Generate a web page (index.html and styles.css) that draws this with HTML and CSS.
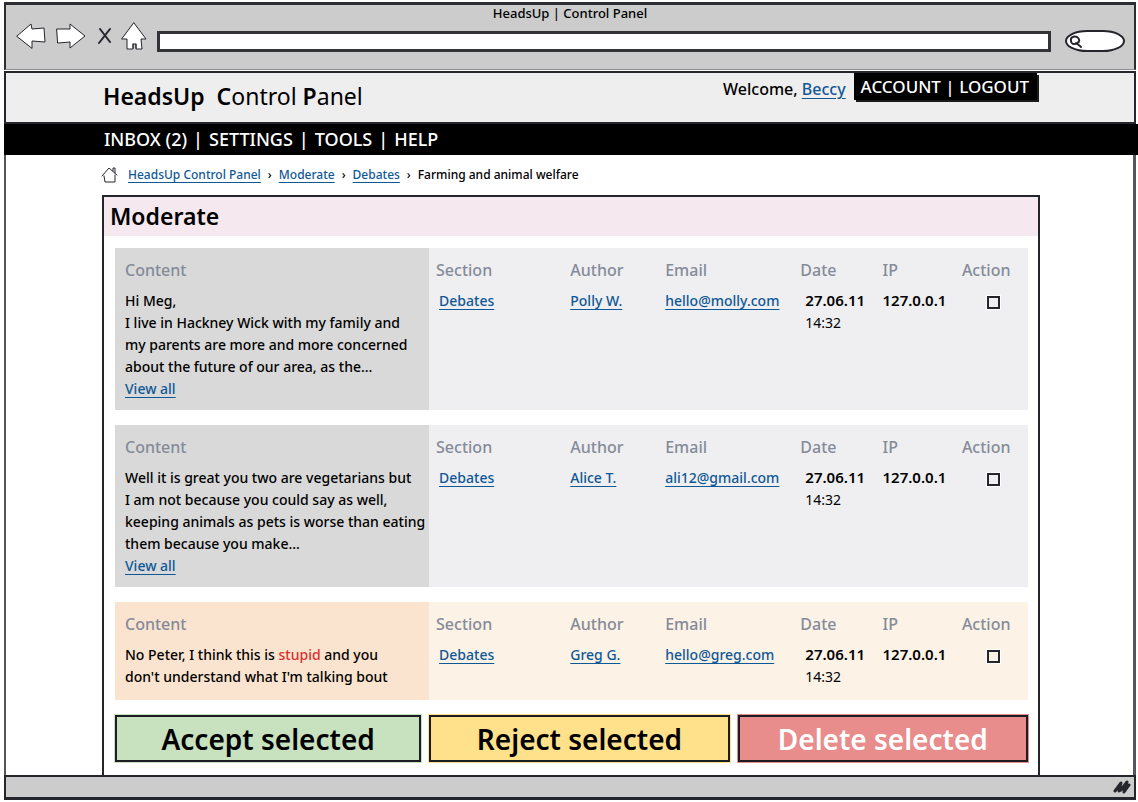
FILE: index.html
```html
<!DOCTYPE html>
<html lang="en">
<head>
<meta charset="utf-8">
<meta name="viewport" content="width=device-width, initial-scale=1">
<title>HeadsUp | Control Panel</title>
<link rel="stylesheet" href="styles.css">
</head>
<body>
<div class="window">
  <div class="chrome">
    <div class="chrome-title">HeadsUp | Control Panel</div>
    <div class="toolbar">
      <button class="tool" type="button" aria-label="Back"><svg width="30" height="28" viewBox="0 0 30 28"><path d="M1 14 L15 2 L16 7 L28 6 L29 20 L16 19 L16 26 Z"/></svg></button>
      <button class="tool tool-forward" type="button" aria-label="Forward"><svg width="30" height="28" viewBox="0 0 30 28"><path d="M1 7 L14 7 L14 2 L29 14 L14 26 L14 20 L2 21 Z"/></svg></button>
      <button class="tool tool-stop" type="button" aria-label="Stop"><svg width="14" height="28" viewBox="0 0 14 28"><path d="M2 7 L12 20 M12 7 L1 21"/></svg></button>
      <button class="tool tool-home" type="button" aria-label="Home"><svg width="26" height="28" viewBox="0 0 26 28"><path d="M13 1 L25 17 L20 17 L21 27 L15 27 V22 L12 22 L12 27 L6 27 L6 17 L1 17 Z M12 22 V26 M15 22 V26"/></svg></button>
      <input class="address" type="text" aria-label="Address">
      <label class="search">
        <svg width="16" height="16" viewBox="0 0 16 16"><path d="M3 8 C2 4 6 3 9 4 C12 6 12 9 9 10 C6 12 3 11 3 8 M8 10 L12 13 L13 14"/></svg>
        <input type="text" aria-label="Search">
      </label>
    </div>
  </div>

  <header class="masthead">
    <div class="logo"><b>HeadsUp</b>&nbsp; <b>C</b>ontrol <b>P</b>anel</div>
    <div class="user">
      <span class="welcome">Welcome, <a href="#">Beccy</a></span>
      <div class="account"><a href="#">ACCOUNT</a> | <a href="#">LOGOUT</a></div>
    </div>
  </header>

  <nav class="menu"><a href="#">INBOX (2)</a><span>|</span><a href="#">SETTINGS</a><span>|</span><a href="#">TOOLS</a><span>|</span><a href="#">HELP</a></nav>

  <main class="page">
    <nav class="crumbs" aria-label="Breadcrumb">
      <svg width="18" height="18" viewBox="0 0 18 18"><path d="M0 10 L7 2 L15 9 M2 10 L3 16 H13 V9 M11 5 V2 H13 V7"/></svg>
      <a href="#">HeadsUp Control Panel</a><span>›</span><a href="#">Moderate</a><span>›</span><a href="#">Debates</a><span>›</span><span>Farming and animal welfare</span>
    </nav>

    <section class="panel">
      <h1>Moderate</h1>
      <div class="panel-body">
        <table class="card">
          <thead><tr><th class="c-content">Content</th><th class="c-section">Section</th><th class="c-author">Author</th><th class="c-email">Email</th><th class="c-date">Date</th><th class="c-ip">IP</th><th class="c-action">Action</th></tr></thead>
          <tbody><tr>
            <td class="message">Hi Meg,<br>I live in Hackney Wick with my family and<br>my parents are more and more concerned<br>about the future of our area, as the...<br><a href="#">View all</a></td>
            <td class="topic"><a href="#">Debates</a></td><td><a href="#">Polly W.</a></td><td><a href="#">hello@molly.com</a></td>
            <td class="date"><b>27.06.11</b><br>14:32</td><td class="ip"><b>127.0.0.1</b></td>
            <td class="pick"><input type="checkbox" aria-label="Select message by Polly W."></td>
          </tr></tbody>
        </table>
        <table class="card">
          <thead><tr><th class="c-content">Content</th><th class="c-section">Section</th><th class="c-author">Author</th><th class="c-email">Email</th><th class="c-date">Date</th><th class="c-ip">IP</th><th class="c-action">Action</th></tr></thead>
          <tbody><tr>
            <td class="message">Well it is great you two are vegetarians but<br>I am not because you could say as well,<br>keeping animals as pets is worse than eating<br>them because you make...<br><a href="#">View all</a></td>
            <td class="topic"><a href="#">Debates</a></td><td><a href="#">Alice T.</a></td><td><a href="#">ali12@gmail.com</a></td>
            <td class="date"><b>27.06.11</b><br>14:32</td><td class="ip"><b>127.0.0.1</b></td>
            <td class="pick"><input type="checkbox" aria-label="Select message by Alice T."></td>
          </tr></tbody>
        </table>
        <table class="card flagged">
          <thead><tr><th class="c-content">Content</th><th class="c-section">Section</th><th class="c-author">Author</th><th class="c-email">Email</th><th class="c-date">Date</th><th class="c-ip">IP</th><th class="c-action">Action</th></tr></thead>
          <tbody><tr>
            <td class="message">No Peter, I think this is <mark>stupid</mark> and you<br>don't understand what I'm talking bout</td>
            <td class="topic"><a href="#">Debates</a></td><td><a href="#">Greg G.</a></td><td><a href="#">hello@greg.com</a></td>
            <td class="date"><b>27.06.11</b><br>14:32</td><td class="ip"><b>127.0.0.1</b></td>
            <td class="pick"><input type="checkbox" aria-label="Select message by Greg G."></td>
          </tr></tbody>
        </table>
        <div class="actions">
          <button class="accept" type="button">Accept selected</button>
          <button class="reject" type="button">Reject selected</button>
          <button class="delete" type="button">Delete selected</button>
        </div>
      </div>
    </section>
  </main>

  <footer class="status">
    <svg width="18" height="16" viewBox="0 0 18 16"><path d="M2 12 L8 4 L6 12 L8 11 L14 3 L11 13 L16 6"/></svg>
  </footer>
</div>
</body>
</html>
```
FILE: styles.css
```css
* { box-sizing: border-box; }

body {
  margin: 0;
  background: #fff;
  color: #000;
  font-family: "Comic Sans MS", "Noto Sans", sans-serif;
  font-size: 13px;
  line-height: 22px;
}

a { color: #0f5896; text-underline-offset: 3px; }
svg { display: block; fill: none; stroke: #25262c; stroke-width: 2; stroke-linejoin: round; stroke-linecap: round; }
button, input { font: inherit; color: inherit; }

.window {
  display: flex;
  flex-direction: column;
  min-height: 100vh;
  padding: 2px 2px 2px 4px;
}

.chrome {
  height: 68px;
  background: #ccc;
  border: 2px solid #2c2d31;
  border-top-width: 3px;
  border-bottom: 1px solid #8c8c8c;
}
.chrome-title { height: 16px; line-height: 16px; text-align: center; font-weight: 500; }
.toolbar { display: flex; align-items: flex-start; padding: 0 9px 0 10px; }
.tool { flex: none; padding: 0; border: 0; background: none; }
.tool path { fill: #fff; stroke-width: 1; }
.tool-forward { margin-left: 10px; }
.tool-stop { margin-left: 12px; }
.tool-home { margin-left: 9px; }
.tool-stop path { fill: none; stroke-width: 2; }
.tool svg { margin-top: 1px; }
.address {
  flex: 1;
  min-width: 0;
  height: 21px;
  margin: 10px 14px 0 10px;
  padding: 0 6px;
  border: 3px solid #333438;
  background: #fff;
}
.search {
  display: flex;
  align-items: center;
  width: 60px;
  height: 22px;
  margin-top: 9px;
  padding-left: 1px;
  border: 2px solid #25262c;
  border-radius: 22px / 11px;
  background: #fff;
}
.search svg { flex: none; }
.search input { width: 100%; min-width: 0; padding: 0; border: 0; background: none; outline: 0; }

.masthead {
  display: flex;
  justify-content: space-between;
  align-items: flex-start;
  height: 53px;
  margin-top: 1px;
  padding: 0 97px;
  border: 2px solid #25262c;
  background: #eee;
}
.logo { line-height: 46px; font-size: 23px; }
.logo b { font-weight: 600; }
.user { display: flex; gap: 8px; white-space: nowrap; }
.welcome { line-height: 32px; font-size: 16px; font-weight: 500; }
.account {
  height: 27px;
  padding: 0 8px 0 7px;
  line-height: 27px;
  font-size: 17px;
  font-weight: 500;
  color: #fff;
  background: #000;
  box-shadow: 2px 2px 0 #1a1a1a;
}
.account a, .menu a { color: #fff; text-decoration: none; }

.menu {
  display: flex;
  gap: 6px;
  margin-right: -2px;
  padding: 0 100px;
  line-height: 31px;
  font-size: 18px;
  font-weight: 500;
  color: #fff;
  background: #000;
}

.page {
  flex: 1;
  display: flex;
  flex-direction: column;
  padding: 0 93px 0 96px;
  border: solid #55565c;
  border-width: 0 3px 0 2px;
}
.crumbs { display: flex; align-items: center; gap: 7px; height: 40px; font-size: 12px; font-weight: 500; }
.crumbs svg { margin-right: 1px; stroke-width: 1; overflow: visible; }

.panel {
  flex: 1;
  display: flex;
  flex-direction: column;
  border: 2px solid #25262c;
  border-bottom: 0;
}
.panel h1 {
  margin: 0;
  padding-left: 6px;
  line-height: 39px;
  font-size: 23px;
  font-weight: 600;
  background: #f5e8ee;
}
.panel-body { display: flex; flex-direction: column; gap: 15px; padding: 12px 10px 12px 11px; }

.card {
  width: 100%;
  table-layout: fixed;
  border-collapse: collapse;
  background: #efeff1;
  font-size: 14px;
  font-weight: 500;
}
.card th, .card td { padding: 0 0 0 7px; text-align: left; vertical-align: top; white-space: nowrap; }
.card th { height: 42px; padding-top: 11px; font-size: 16px; font-weight: 500; color: #858b99; }
.card td { padding-bottom: 10px; }
.card .c-content, .card .message { padding-left: 10px; background: #d9d9d9; }
.c-content { width: 34.4%; }
.c-section { width: 14.7%; }
.c-author { width: 10.4%; }
.c-email { width: 14.8%; }
.c-date { width: 9%; }
.c-ip { width: 8.7%; }
.card .topic { padding-left: 10px; }
.card .date { padding-left: 12px; font-weight: 400; }
.date b, .ip b { font-size: 15px; font-weight: 600; line-height: 20px; }
.flagged { background: #fcf2e6; }
.card.flagged .c-content, .card.flagged .message { background: #fbe4cf; }
.card mark { color: #d83030; background: none; }
.card.flagged td { padding-bottom: 12px; }

.card .pick { padding-top: 6px; padding-left: 32px; line-height: 0; }
.pick input {
  appearance: none;
  width: 13px;
  height: 13px;
  margin: 0;
  border: 2px solid #25262c;
  background: transparent;
  box-shadow: 0 0 0 1px #fff;
}
.pick input:checked { background: #25262c; }

.actions { display: grid; grid-template-columns: 307fr 301fr 291fr; gap: 8px; }
.actions button {
  height: 47px;
  padding: 0;
  border: 2px solid #1c1d22;
  font-size: 28px;
  font-weight: 600;
  line-height: 40px;
}
.actions .accept { background: #c8e1be; box-shadow: 0 0 0 1px #c8e1be; }
.actions .reject { background: #ffe18c; box-shadow: 0 0 0 1px #ffe18c; }
.actions .delete { background: #e88c8c; box-shadow: 0 0 0 1px #e88c8c; color: #fff; }

.status {
  display: flex;
  justify-content: flex-end;
  align-items: center;
  height: 25px;
  padding-right: 3px;
  border: 2px solid #25262c;
  border-bottom-width: 3px;
  background: #ccc;
}
.status svg { stroke-width: 3; }
```
